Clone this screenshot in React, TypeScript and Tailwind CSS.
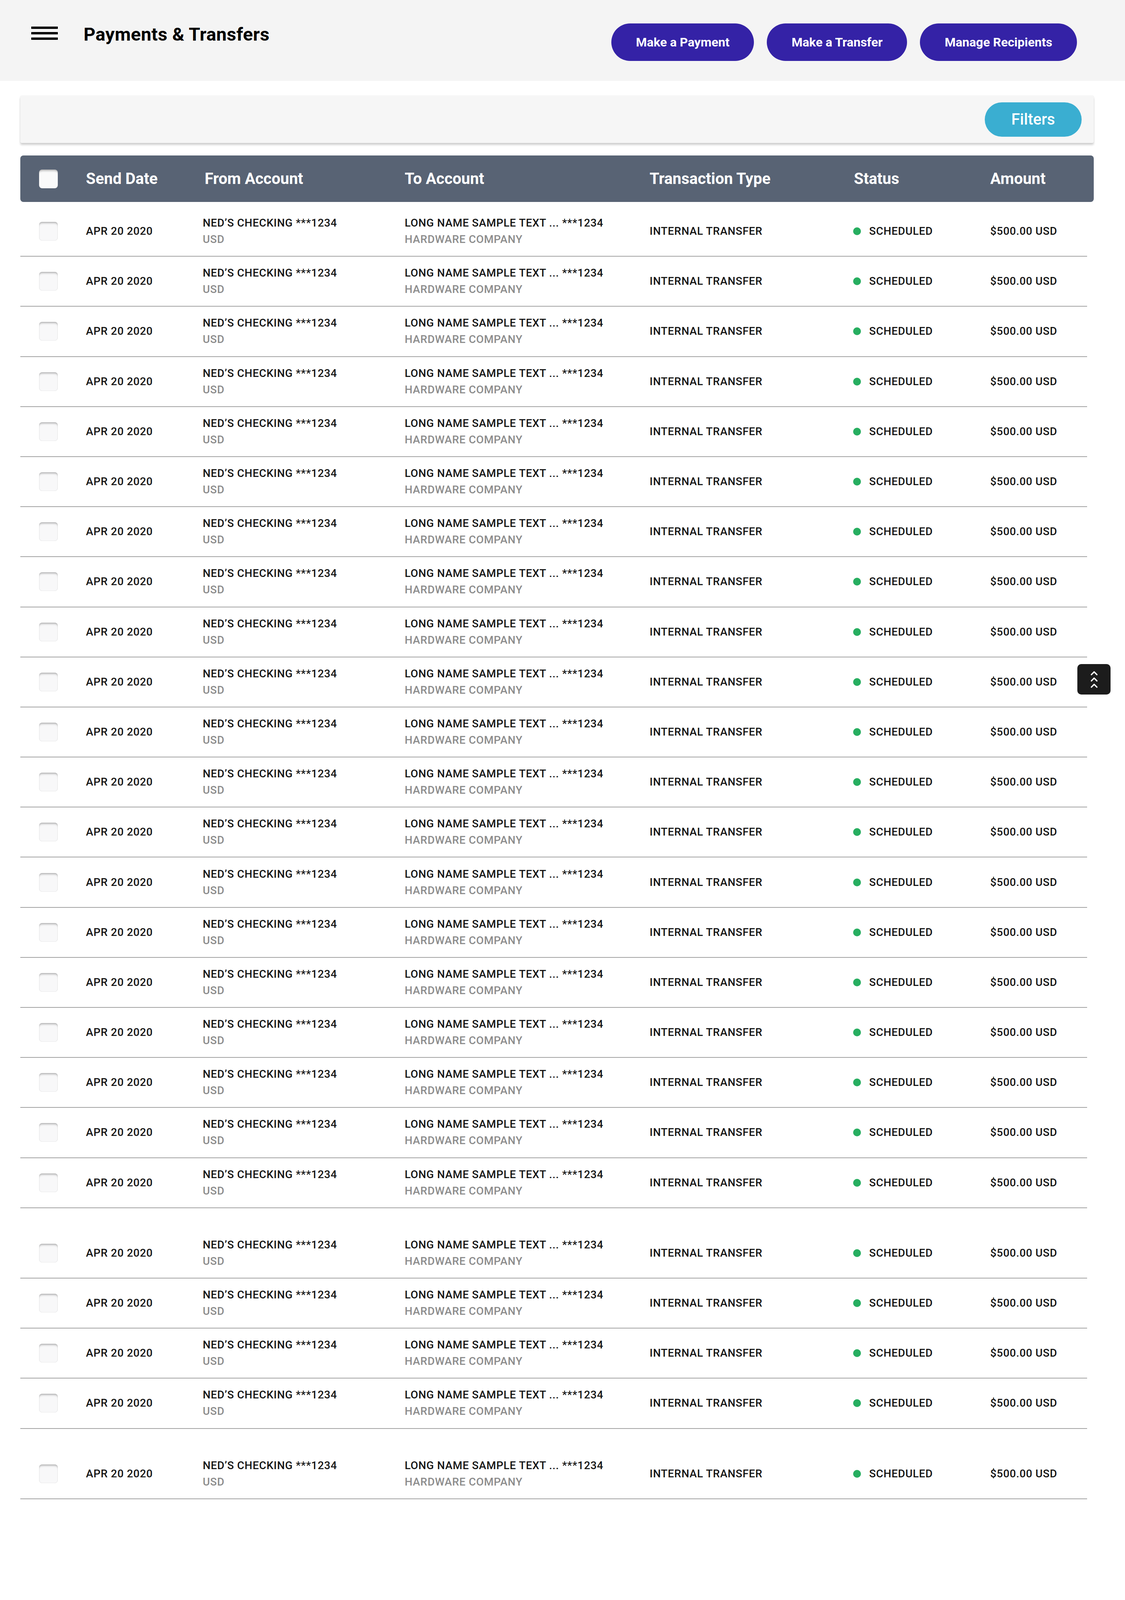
import React from "react";

const FONT = { fontFamily: "Roboto, 'Noto Sans', Arial, sans-serif" };

function Checkbox() {
  return (
    <div className="w-[48px] h-[48px] rounded-[8px] bg-[#f8f8f9] shadow-[inset_0_6px_5px_-3px_rgba(0,0,0,0.28),inset_0_0_2px_rgba(0,0,0,0.18)]" />
  );
}

function Row({ tall, first }: { tall?: boolean; first?: boolean }) {
  return (
    <div
      className={`flex items-center border-b-2 border-[#a3a3a3] pl-[48px] text-[28px] font-medium tracking-[0.025em] text-[#141414] ${
        tall ? "h-[180.2px] pt-[52px]" : first ? "h-[140.2px] pt-[12px]" : "h-[128.2px]"
      }`}
    >
      <div className="w-[120px] shrink-0">
        <Checkbox />
      </div>
      <div className="w-[299px] shrink-0 leading-[42px]">APR 20 2020</div>
      <div className="w-[517px] shrink-0 leading-[42px]">
        <div>NED’S CHECKING ***1234</div>
        <div className="text-[#8c8c8c]">USD</div>
      </div>
      <div className="w-[627px] shrink-0 leading-[42px]">
        <div>LONG NAME SAMPLE TEXT ... ***1234</div>
        <div className="text-[#8c8c8c]">HARDWARE COMPANY</div>
      </div>
      <div className="w-[521px] shrink-0 leading-[42px]">INTERNAL TRANSFER</div>
      <div className="w-[351px] shrink-0 flex items-center gap-[21px] leading-[42px]">
        <span className="w-[20px] h-[20px] rounded-full bg-[#27ae60] shrink-0" />
        <span>SCHEDULED</span>
      </div>
      <div className="flex-1 leading-[42px]">$500.00 USD</div>
    </div>
  );
}

export default function App() {
  const rows = Array.from({ length: 25 }, (_, i) => i);
  return (
    <div className="relative min-h-[4114px] bg-white" style={FONT}>
      {/* Top bar */}
      <header className="h-[207px] bg-[#f4f4f4] flex items-start pt-[60px] pl-[80px] pr-[123px]">
        <div className="mt-[8px] w-[68px] h-[34px] flex flex-col justify-between">
          <span className="block h-[6px] bg-black" />
          <span className="block h-[6px] bg-black" />
          <span className="block h-[6px] bg-black" />
        </div>
        <h1 className="ml-[66px] mt-[4px] text-[47px] leading-[47px] font-bold text-black tracking-[0.01em]">
          Payments &amp; Transfers
        </h1>
        <div className="ml-auto flex gap-[33px]">
          {["Make a Payment", "Make a Transfer", "Manage Recipients"].map((t) => (
            <button
              key={t}
              className="h-[96px] px-[63px] rounded-full bg-[#3422a6] text-white text-[32px] font-bold"
            >
              {t}
            </button>
          ))}
        </div>
      </header>

      <main className="pl-[52px] pr-[80px]">
        {/* Filter bar */}
        <div className="mt-[38px] h-[121px] rounded-[4px] bg-[#f6f6f6] shadow-[0_5px_5px_rgba(0,0,0,0.18),0_0_3px_rgba(0,0,0,0.08)] flex items-center justify-end pr-[31px]">
          <button className="w-[248px] h-[88px] rounded-full bg-[#3aaed1] text-white text-[40px] font-medium">
            Filters
          </button>
        </div>

        {/* Table header */}
        <div className="mt-[32px] h-[119px] rounded-[8px] bg-[#586374] flex items-center pl-[48px] text-white text-[40px] font-bold">
          <div className="w-[120px] shrink-0">
            <div className="w-[48px] h-[48px] rounded-[8px] bg-[#fafafa] shadow-[inset_0_6px_5px_-3px_rgba(0,0,0,0.3)]" />
          </div>
          <div className="w-[299px] shrink-0">Send Date</div>
          <div className="w-[517px] shrink-0 pl-[5px]">From Account</div>
          <div className="w-[627px] shrink-0">To Account</div>
          <div className="w-[521px] shrink-0">Transaction Type</div>
          <div className="w-[351px] shrink-0 pl-[2px]">Status</div>
          <div className="flex-1">Amount</div>
        </div>

        {/* Rows */}
        <div className="mr-[17px]">
          {rows.map((i) => (
            <Row key={i} first={i === 0} tall={i === 20 || i === 24} />
          ))}
        </div>
      </main>

      {/* Scroll to top */}
      <button className="absolute left-[2758px] top-[1700px] w-[85px] h-[78px] rounded-[10px] bg-[#1c1c1c] flex items-center justify-center">
        <svg width="18" height="44" viewBox="0 0 18 44" fill="none" stroke="white" strokeWidth="3.2" strokeLinecap="round" strokeLinejoin="round">
          <path d="M2 10 L9 3 L16 10" />
          <path d="M2 26 L9 19 L16 26" />
          <path d="M2 42 L9 35 L16 42" />
        </svg>
      </button>
    </div>
  );
}
